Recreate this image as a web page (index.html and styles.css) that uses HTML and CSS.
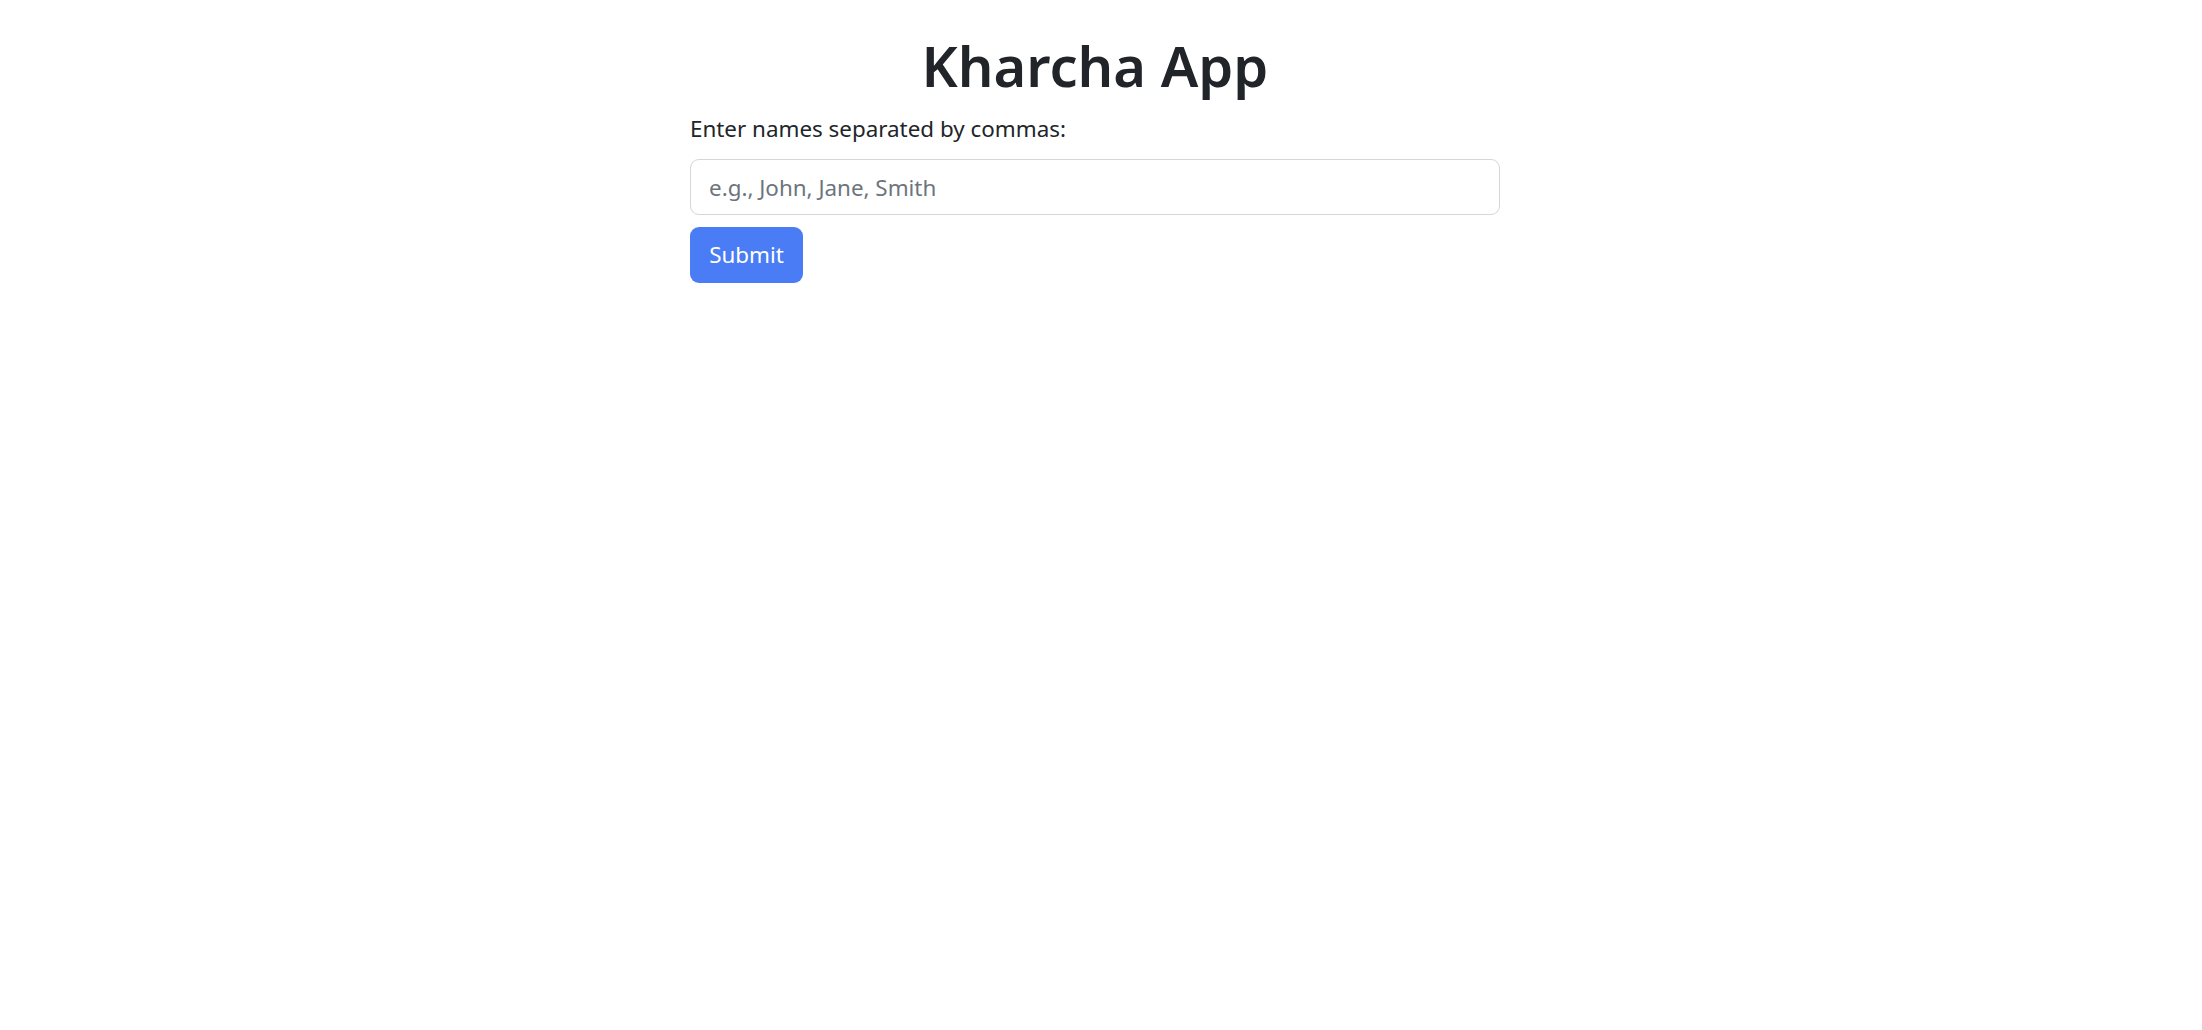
FILE: index.html
```html
<!DOCTYPE html>
<html lang="en">
<head>
<meta charset="utf-8">
<title>Kharcha App</title>
<link rel="stylesheet" href="styles.css">
</head>
<body>
<main class="container">
  <h1 class="title">Kharcha App</h1>
  <form class="names-form">
    <label class="form-label" for="names">Enter names separated by commas:</label>
    <input class="form-control" id="names" type="text" placeholder="e.g., John, Jane, Smith">
    <button class="btn-primary" type="button">Submit</button>
  </form>
</main>
</body>
</html>
```

FILE: styles.css
```css
html, body {
  margin: 0;
  padding: 0;
  background: #ffffff;
}
body {
  font-family: "Noto Sans", "Open Sans", sans-serif;
  color: #212529;
}
.container {
  width: 810px;
  margin-left: calc(50% - 411px);
  padding-top: 29px;
}
.title {
  margin: 0 0 10px;
  font-size: 56px;
  font-weight: 600;
  line-height: 72px;
  text-align: center;
  color: #212529;
}
.names-form {
  display: flex;
  flex-direction: column;
  align-items: flex-start;
}
.form-label {
  font-size: 22.4px;
  line-height: 36px;
  margin-bottom: 12px;
  color: #212529;
}
.form-control {
  box-sizing: border-box;
  width: 100%;
  height: 56px;
  padding: 0 18px;
  border: 1.5px solid #d3d6da;
  border-radius: 9px;
  font-family: inherit;
  font-size: 22.4px;
  color: #212529;
  background: #fff;
  outline: none;
  margin: 0 0 12px;
}
.form-control::placeholder {
  color: #6c757d;
}
.btn-primary {
  box-sizing: border-box;
  width: 113px;
  height: 56px;
  padding: 0 18px;
  border: none;
  border-radius: 9px;
  background: #4a7cf6;
  color: #ffffff;
  font-family: inherit;
  font-size: 22.4px;
  line-height: 36px;
  cursor: pointer;
}
```
